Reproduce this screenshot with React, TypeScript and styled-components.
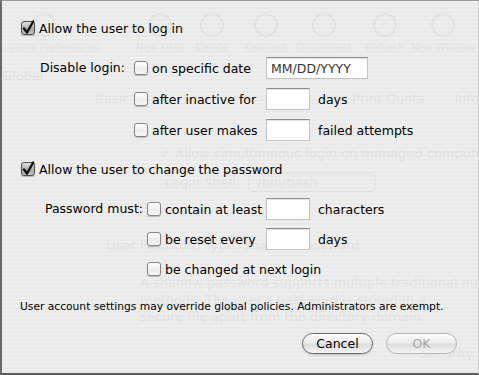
import React from 'react';
import styled, { createGlobalStyle } from 'styled-components';

const GlobalStyle = createGlobalStyle`
  html, body {
    margin: 0;
    padding: 0;
    background: #ececec;
  }
  body {
    width: 479px;
    height: 375px;
    overflow: hidden;
    font-family: 'DejaVu Sans', 'Liberation Sans', sans-serif;
  }
`;

// the window behind the sheet, seen through it
const ghostTools = [
  { label: 'Accounts  Preferences', width: 140 },
  { label: 'New User', width: 90 },
  { label: 'Delete', width: 14 },
  { label: 'Connect', width: 94 },
  { label: 'Disconnect', width: 22 },
  { label: 'Refresh', width: 100 },
  { label: 'New Window', width: 16 },
];

export default function App() {
  return (
    <Stage>
      <GlobalStyle />
      <Ghost aria-hidden>
        <GhostToolbar>
          {ghostTools.map((t) => (
            <GhostTool key={t.label} $width={t.width}>
              <GhostIcon />
              {t.label}
            </GhostTool>
          ))}
        </GhostToolbar>
        <GhostLine $top={14} $left={2}>Global</GhostLine>
        <GhostLine $top={8} $left={95}>
          Basic<GhostGap $w={232} />Print Quota<GhostGap $w={30} />Info
        </GhostLine>
        <GhostLine $top={40} $left={160}>✓ Allow simultaneous login on managed computers</GhostLine>
        <GhostLine $top={12} $left={165}>
          Login Shell: <GhostPopup>/bin/bash</GhostPopup>
        </GhostLine>
        <GhostLine $top={46} $left={106}>User Password Type: Shadow Password</GhostLine>
        <GhostLine $top={22} $left={140}>A shadow password supports multiple traditional authentication</GhostLine>
        <GhostLine $top={2} $left={140}>methods. The user&apos;s password is stored in a</GhostLine>
        <GhostLine $top={2} $left={140}>secure file apart from the directory domain.</GhostLine>
        <GhostLine $top={22} $left={420}>Security...</GhostLine>
      </Ghost>

      <Sheet>
        <HeadingRow>
          <CheckBox checked />
          Allow the user to log in
        </HeadingRow>

        <Group $mt={16}>
          <GroupLabel $width={85} $mr={9}>Disable login:</GroupLabel>
          <OptionList $gap={7}>
            <OptionRow>
              <OptionCell $width={132}>
                <CheckBox />
                on specific date
              </OptionCell>
              <Field $width={102} defaultValue="MM/DD/YYYY" />
            </OptionRow>
            <OptionRow>
              <OptionCell $width={132}>
                <CheckBox />
                after inactive for
              </OptionCell>
              <Field $width={44} />
              <Suffix>days</Suffix>
            </OptionRow>
            <OptionRow>
              <OptionCell $width={132}>
                <CheckBox />
                after user makes
              </OptionCell>
              <Field $width={44} />
              <Suffix>failed attempts</Suffix>
            </OptionRow>
          </OptionList>
        </Group>

        <HeadingRow $mt={15}>
          <CheckBox checked />
          Allow the user to change the password
        </HeadingRow>

        <Group $mt={16}>
          <GroupLabel $width={103} $mr={4}>Password must:</GroupLabel>
          <OptionList $gap={6}>
            <OptionRow>
              <OptionCell $width={119}>
                <CheckBox />
                contain at least
              </OptionCell>
              <Field $width={44} />
              <Suffix>characters</Suffix>
            </OptionRow>
            <OptionRow>
              <OptionCell $width={119}>
                <CheckBox />
                be reset every
              </OptionCell>
              <Field $width={44} />
              <Suffix>days</Suffix>
            </OptionRow>
            <OptionRow>
              <OptionCell $width={220}>
                <CheckBox />
                be changed at next login
              </OptionCell>
            </OptionRow>
          </OptionList>
        </Group>

        <Note>User account settings may override global policies. Administrators are exempt.</Note>

        <ButtonBar>
          <PillButton>Cancel</PillButton>
          <PillButton disabled>OK</PillButton>
        </ButtonBar>
      </Sheet>
    </Stage>
  );
}

function CheckBox({ checked }: { checked?: boolean }) {
  return (
    <Box $checked={checked}>
      {checked && (
        <svg width="14" height="15" viewBox="0 0 14 15" style={{ overflow: 'visible' }}>
          <path d="M3 7.5 L6 11.5 L12.2 0.5" fill="none" stroke="#111" strokeWidth="2.4" strokeLinecap="round" strokeLinejoin="round" />
        </svg>
      )}
    </Box>
  );
}

const Stage = styled.div`
  position: relative;
  width: 479px;
  height: 375px;
  overflow: hidden;
  background: #ececec;
  color: #000;
`;

const Ghost = styled.div`
  display: flex;
  flex-direction: column;
  height: 100%;
  font-size: 12px;
  color: #666;
`;

const GhostToolbar = styled.div`
  display: flex;
  align-items: flex-start;
  padding-top: 13px;
  margin-left: -25px;
`;

const GhostTool = styled.div<{ $width: number }>`
  width: ${(p) => p.$width}px;
  display: flex;
  flex-direction: column;
  align-items: center;
  gap: 5px;
  font-size: 10px;
  line-height: 12px;
  white-space: nowrap;
`;

const GhostIcon = styled.span`
  box-sizing: border-box;
  width: 24px;
  height: 24px;
  border-radius: 50%;
  border: 2px solid #777;
`;

const GhostLine = styled.div<{ $top: number; $left: number }>`
  margin-top: ${(p) => p.$top}px;
  padding-left: ${(p) => p.$left}px;
  font-size: 13px;
  white-space: nowrap;
  display: flex;
  align-items: center;
`;

const GhostGap = styled.span<{ $w: number }>`
  display: inline-block;
  width: ${(p) => p.$w}px;
`;

const GhostPopup = styled.span`
  margin-left: 8px;
  width: 110px;
  padding: 1px 8px;
  border: 1px solid #666;
  border-radius: 5px;
`;

const Sheet = styled.div`
  position: absolute;
  inset: 0;
  box-sizing: border-box;
  display: flex;
  flex-direction: column;
  padding: 15px 21px 0 19px;
  border-top: 1px solid #9a9a9a;
  border-left: 2px solid #6a6a6a;
  border-bottom: 2px solid #5c5c5c;
  border-right: 1px solid #cfcfcf;
  background: repeating-linear-gradient(
    to bottom,
    rgba(239, 239, 239, 0.92) 0 2px,
    rgba(233, 233, 233, 0.92) 2px 4px
  );
  font-size: 12.5px;
`;

const HeadingRow = styled.div<{ $mt?: number }>`
  display: flex;
  align-items: center;
  gap: 4px;
  height: 24px;
  margin-top: ${(p) => p.$mt ?? 0}px;
`;

const Group = styled.div<{ $mt: number }>`
  display: flex;
  align-items: flex-start;
  margin-top: ${(p) => p.$mt}px;
  padding-left: 19px;
`;

const GroupLabel = styled.div<{ $width: number; $mr: number }>`
  width: ${(p) => p.$width}px;
  margin-right: ${(p) => p.$mr}px;
  text-align: right;
  line-height: 24px;
  white-space: nowrap;
`;

const OptionList = styled.div<{ $gap: number }>`
  display: flex;
  flex-direction: column;
  gap: ${(p) => p.$gap}px;
`;

const OptionRow = styled.div`
  display: flex;
  align-items: center;
  height: 24px;
`;

const OptionCell = styled.label<{ $width: number }>`
  display: flex;
  align-items: center;
  gap: 4px;
  width: ${(p) => p.$width}px;
  white-space: nowrap;
`;

const Box = styled.span<{ $checked?: boolean }>`
  flex: none;
  box-sizing: border-box;
  width: 14px;
  height: 14px;
  border-radius: 3px;
  display: flex;
  align-items: center;
  justify-content: center;
  border: 1px solid ${(p) => (p.$checked ? '#4e4e4e' : '#858585')};
  background: ${(p) =>
    p.$checked
      ? 'linear-gradient(#e0e0e0, #a9a9a9 60%, #c4c4c4)'
      : 'linear-gradient(#ffffff, #ececec 60%, #f7f7f7)'};
  box-shadow: 0 1px 1px rgba(0, 0, 0, 0.22);
`;

const Field = styled.input<{ $width: number }>`
  box-sizing: border-box;
  width: ${(p) => p.$width}px;
  height: 22px;
  padding: 0 4px;
  margin: 0;
  border: 1px solid #c4c4c4;
  border-top-color: #8e8e8e;
  background: #fff;
  box-shadow: inset 0 1px 1px rgba(0, 0, 0, 0.12);
  font: 12.5px 'DejaVu Sans', sans-serif;
  color: #333;
  outline: none;
`;

const Suffix = styled.span`
  margin-left: 8px;
  white-space: nowrap;
`;

const Note = styled.p`
  margin: 19px 0 0 -1px;
  font-size: 10.7px;
  line-height: 14px;
  white-space: nowrap;
`;

const ButtonBar = styled.div`
  display: flex;
  justify-content: flex-end;
  gap: 13px;
  margin-top: 19px;
`;

const PillButton = styled.button`
  box-sizing: border-box;
  width: 71px;
  height: 21px;
  padding: 0;
  border-radius: 11px;
  border: 1px solid #6c6c6c;
  background: linear-gradient(#ffffff, #ebebeb 48%, #dcdcdc 52%, #f4f4f4);
  box-shadow: 0 1px 2px rgba(0, 0, 0, 0.18);
  font: 12.5px 'DejaVu Sans', sans-serif;
  color: #000;

  &:disabled {
    border-color: #b6b6b6;
    color: #a6a6a6;
    box-shadow: none;
  }
`;
